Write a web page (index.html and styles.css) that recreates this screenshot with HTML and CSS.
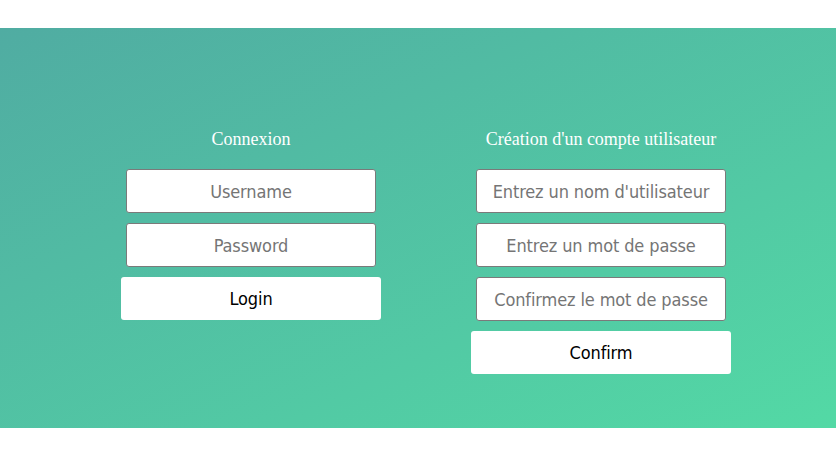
FILE: index.html
```html
<!DOCTYPE html>
<html lang="fr">
<head>
<meta charset="utf-8">
<title>Connexion</title>
<link rel="stylesheet" href="styles.css">
</head>
<body>
<div class="wrapper">
  <div class="forms">
    <form class="form">
      <h2 class="title">Connexion</h2>
      <input class="field" type="text" placeholder="Username">
      <input class="field" type="password" placeholder="Password">
      <button class="btn" type="button">Login</button>
    </form>
    <form class="form">
      <h2 class="title">Création d'un compte utilisateur</h2>
      <input class="field" type="text" placeholder="Entrez un nom d'utilisateur">
      <input class="field" type="password" placeholder="Entrez un mot de passe">
      <input class="field" type="password" placeholder="Confirmez le mot de passe">
      <button class="btn" type="button">Confirm</button>
    </form>
  </div>
</div>
</body>
</html>
```
FILE: styles.css
```css
html, body {
  margin: 0;
  padding: 0;
  background: #ffffff;
}
body {
  padding-top: 28px;
}
.wrapper {
  height: 400px;
  background: linear-gradient(to bottom right, #50aca2 0%, #53d9a5 100%);
  overflow: hidden;
  box-sizing: border-box;
  padding-top: 100px;
}
.forms {
  display: flex;
  justify-content: center;
  align-items: flex-start;
  gap: 90px;
  padding-left: 16px;
}
.form {
  width: 260px;
  display: flex;
  flex-direction: column;
  align-items: center;
  gap: 10px;
  margin: 0;
}
.title {
  margin: 0 0 9px 0;
  font-family: "Liberation Serif", "Times New Roman", serif;
  font-weight: normal;
  font-size: 18px;
  line-height: 22px;
  color: #ffffff;
  white-space: nowrap;
}
.field {
  box-sizing: border-box;
  width: 250px;
  height: 44px;
  margin: 0;
  padding: 0 6px;
  border: 1px solid #7a7a7a;
  border-radius: 3px;
  background: #ffffff;
  font-family: "DejaVu Sans", sans-serif;
  font-stretch: condensed;
  font-size: 18px;
  letter-spacing: -0.12px;
  text-align: center;
  color: #333333;
  outline: none;
}
.field::placeholder {
  color: #757575;
  opacity: 1;
}
.btn {
  box-sizing: border-box;
  width: 260px;
  height: 43px;
  margin: 0;
  padding: 0;
  border: none;
  border-radius: 3px;
  background: #ffffff;
  font-family: "DejaVu Sans", sans-serif;
  font-stretch: condensed;
  font-size: 18px;
  letter-spacing: -0.12px;
  color: #000000;
  cursor: pointer;
}
```
